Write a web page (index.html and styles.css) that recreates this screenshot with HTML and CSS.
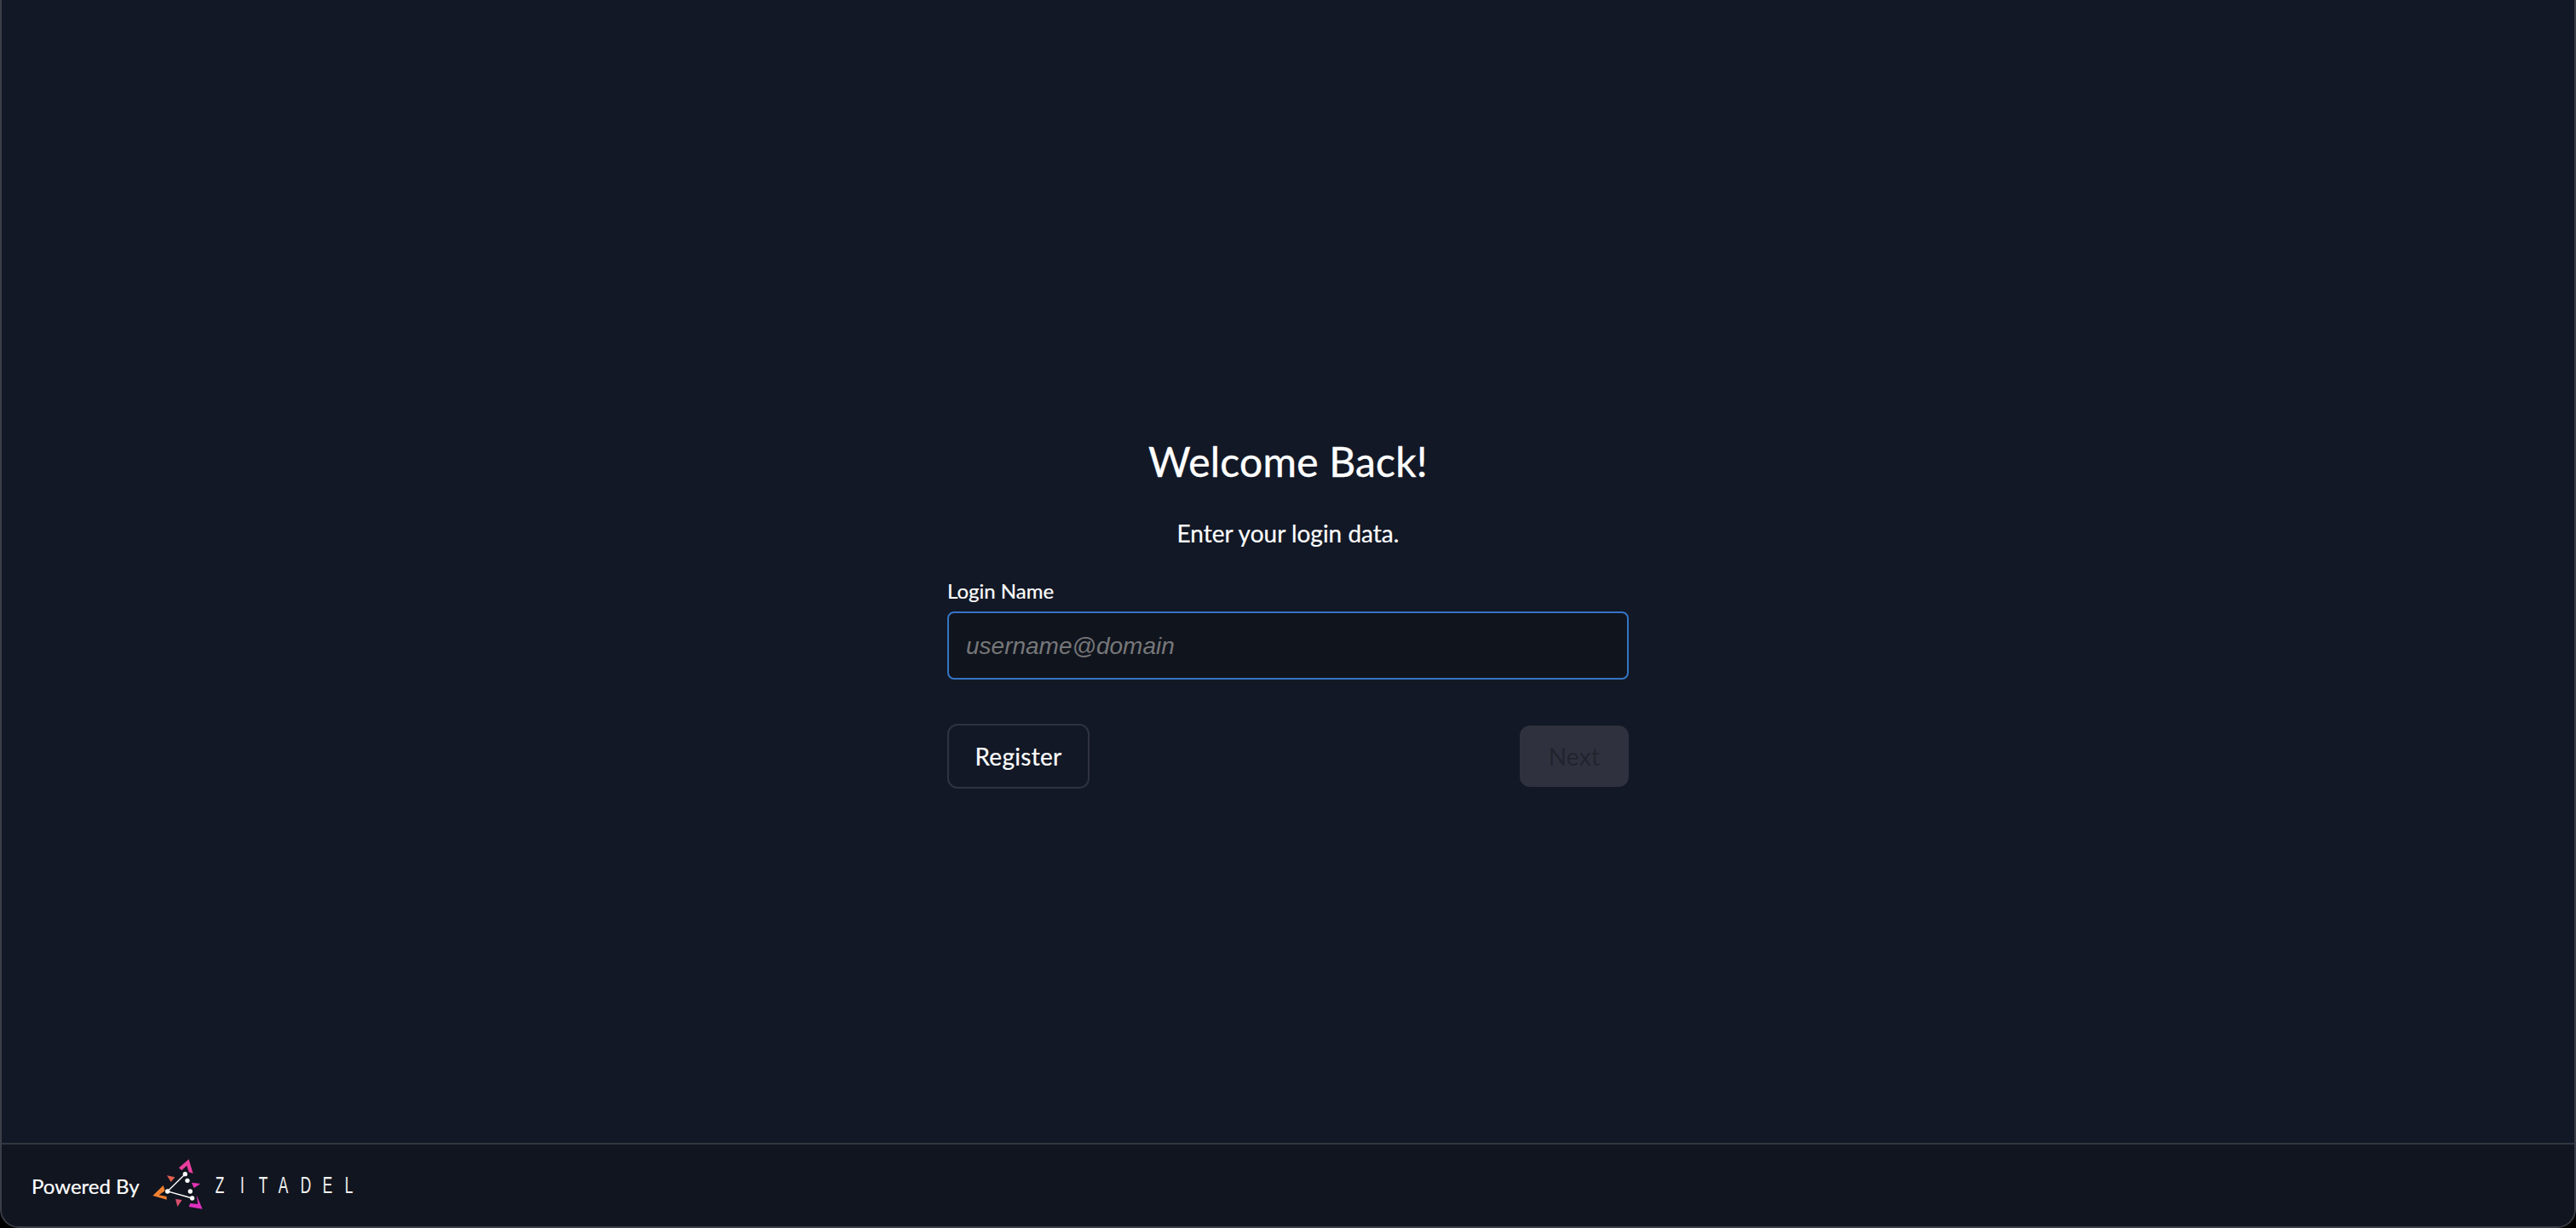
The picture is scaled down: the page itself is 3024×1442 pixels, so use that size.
FILE: index.html
```html
<!DOCTYPE html>
<html lang="en">
<head>
<meta charset="utf-8">
<title>Welcome Back!</title>
<link rel="stylesheet" href="styles.css">
</head>
<body>
<div class="frame">
  <main class="main">
    <section class="card">
      <h1 class="title">Welcome Back!</h1>
      <p class="subtitle">Enter your login data.</p>
      <label class="label" for="login">Login Name</label>
      <input class="input" id="login" type="text" placeholder="username@domain">
      <div class="actions">
        <button class="btn btn-register" type="button">Register</button>
        <button class="btn btn-next" type="button" disabled>Next</button>
      </div>
    </section>
  </main>
  <footer class="footer">
    <span class="powered">Powered By</span>
    <svg class="logo" width="244" height="70" viewBox="0 0 244 70" aria-label="ZITADEL">
      <g transform="translate(-16 -9) scale(.3333)">
        <polygon fill="#e83e9e" points="150,70 185,40 200,90 185,85 178,62 160,79"/>
        <polygon fill="#f08030" points="58,168 95,132 101,151 80,166 107,171 107,182"/>
        <polygon fill="#e030c0" points="212,166 233,215 185,207 190,195 217,198"/>
        <polygon fill="#e0604f" points="108,97 136,103 122,120"/>
        <polygon fill="#e535b5" points="195,122 226,126 203,141"/>
        <polygon fill="#d8506f" points="138,180 161,183 145,207"/>
        <path d="M172 92 110 153 197 177" fill="none" stroke="#fff" stroke-width="4"/>
        <g fill="#fff">
          <circle cx="172" cy="92" r="8"/>
          <circle cx="180" cy="115" r="8"/>
          <circle cx="110" cy="153" r="8"/>
          <circle cx="190" cy="153" r="8"/>
          <circle cx="197" cy="177" r="8"/>
        </g>
      </g>
      <text class="wordmark" transform="scale(.62 1)" x="124 171 206 243 285 327 369" y="44">ZITADEL</text>
    </svg>
  </footer>
</div>
</body>
</html>
```

FILE: styles.css
```css
* { box-sizing: border-box; }
html, body { margin: 0; height: 100%; background: #000; }
body { font-family: Lato, sans-serif; color: #fff; }

.frame {
  height: 100vh;
  display: flex;
  flex-direction: column;
  background: #121826;
  border: solid #3b3e48;
  border-width: 0 2px 2px 2px;
  border-radius: 0 0 22px 22px;
  overflow: hidden;
}

.main {
  flex: 1;
  display: flex;
  justify-content: center;
  padding-top: 510px;
}

.card { width: 800px; display: flex; flex-direction: column; }

.title {
  margin: 0;
  font-size: 48px;
  line-height: 64px;
  font-weight: 400;
  letter-spacing: 0.2px;
  text-align: center;
  -webkit-text-stroke: 0.4px #fff;
}

.subtitle {
  margin: 32px 0 0;
  font-size: 28px;
  line-height: 40px;
  text-align: center;
  -webkit-text-stroke: 0.2px #fff;
}

.label {
  margin-top: 32px;
  font-size: 24px;
  line-height: 32px;
  -webkit-text-stroke: 0.2px #fff;
}

.input {
  margin-top: 8px;
  height: 80px;
  padding: 2px 20px 0;
  background: #10141d;
  border: 2px solid #3574c4;
  border-radius: 8px;
  color: #fff;
  font: 28px "Liberation Sans", Arial, sans-serif;
  outline: none;
}
.input::placeholder { color: #767779; font-style: italic; opacity: 1; }

.actions {
  margin-top: 52px;
  display: flex;
  justify-content: space-between;
  align-items: center;
}

.btn {
  font-family: Lato, sans-serif;
  font-size: 28px;
  letter-spacing: 0.3px;
  border-radius: 12px;
  padding: 0;
}
.btn-register {
  width: 167px;
  height: 76px;
  background: transparent;
  color: #fff;
  border: 2px solid #30333e;
  -webkit-text-stroke: 0.2px #fff;
}
.btn-next {
  width: 128px;
  height: 72px;
  background: #2f323e;
  color: #21242e;
  border: 0;
}

.footer {
  height: 98px;
  flex: none;
  display: flex;
  align-items: center;
  padding-left: 35px;
  background: #11151f;
  border-top: 2px solid #33363f;
}
.powered { font-size: 24px; -webkit-text-stroke: 0.2px #fff; }
.logo { margin-left: 12px; flex: none; }
.wordmark {
  font-family: "Liberation Sans", sans-serif;
  font-size: 28px;
  fill: #f2f2f2;
}
```
